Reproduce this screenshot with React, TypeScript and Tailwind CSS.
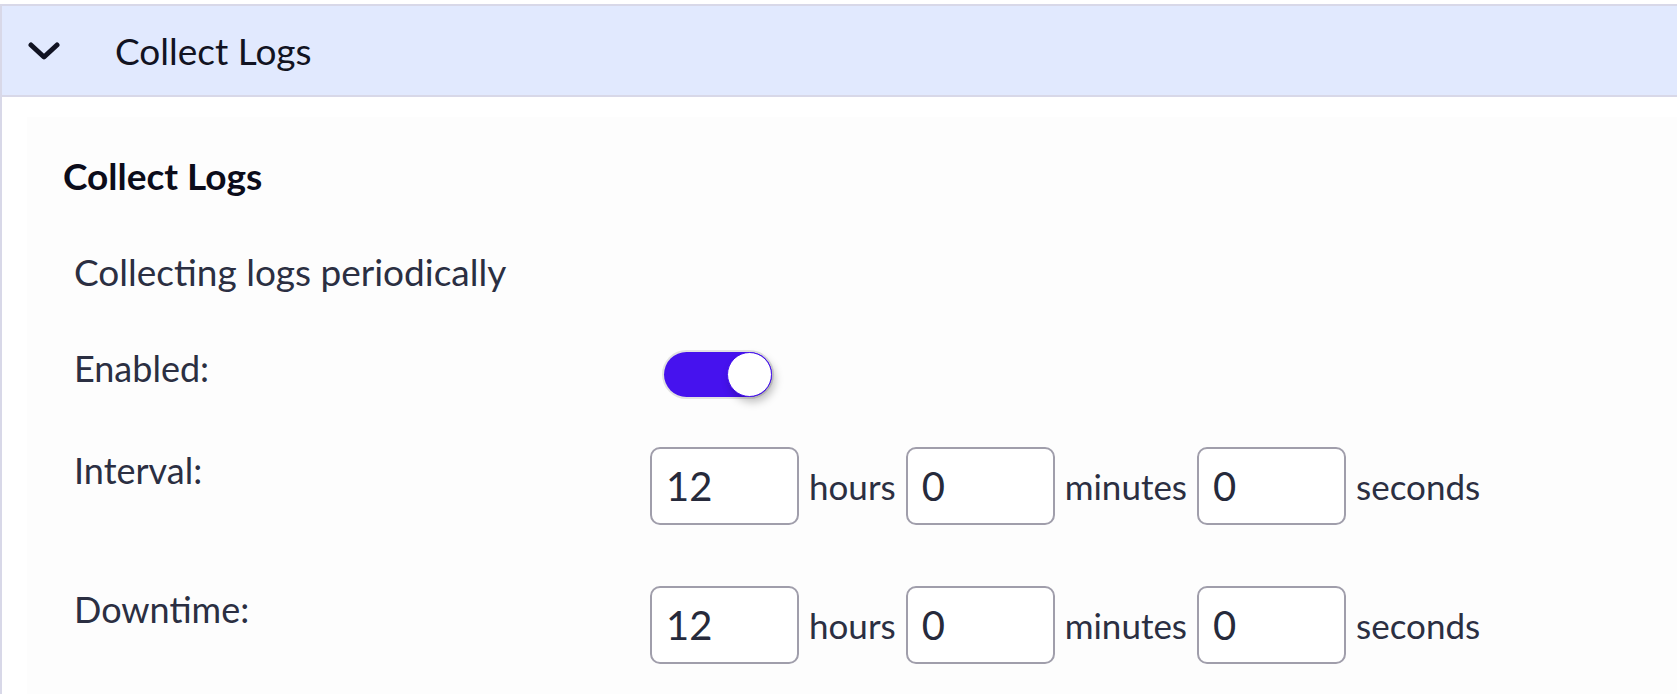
import React from "react";

const font = { fontFamily: "Lato, 'Noto Sans', sans-serif" };

function Chevron() {
  return (
    <svg width="32" height="20" viewBox="0 0 32 20" className="shrink-0">
      <polyline
        points="3,4 16,16 29,4"
        fill="none"
        stroke="#111322"
        strokeWidth="5"
        strokeLinecap="round"
        strokeLinejoin="round"
      />
    </svg>
  );
}

function Toggle() {
  return (
    <div className="relative h-[45px] w-[108px] rounded-full bg-[#4612ee] ring-2 ring-[#e2e2e2]">
      <div className="absolute right-0 top-0 h-[45px] w-[45px] rounded-full border border-[#4612ee] bg-white shadow-[3px_5px_8px_rgba(0,0,0,0.25)]" />
    </div>
  );
}

function TimeInput({ value }: { value: string }) {
  return (
    <div className="flex h-[78px] w-[149px] items-center rounded-[10px] border-2 border-[#a09eab] bg-white px-[14px] text-[40px] text-[#262a3b]">
      {value}
    </div>
  );
}

function TimeRow({ label }: { label: string }) {
  return (
    <div className="flex items-start">
      <div className="w-[576px] pt-[2px] text-[36px] leading-[43px] text-[#2b2f42]">{label}</div>
      <div className="flex items-center text-[35px] text-[#2b2f42]">
        <TimeInput value="12" />
        <span className="px-[10px]">hours</span>
        <TimeInput value="0" />
        <span className="px-[10px]">minutes</span>
        <TimeInput value="0" />
        <span className="px-[10px]">seconds</span>
      </div>
    </div>
  );
}

export default function App() {
  return (
    <div className="min-h-[694px] bg-white pt-[4px]" style={font}>
      <div className="border-l-2 border-[#d8d8e8] min-h-[690px]">
        {/* Accordion header */}
        <div className="flex h-[93px] items-center border-y-2 border-[#d8d8e8] bg-[#e1e9fe] pl-[26px]">
          <Chevron />
          <span className="ml-[55px] text-[37px] text-[#111322]">Collect Logs</span>
        </div>

        {/* Body */}
        <div className="pl-[25px] pt-[20px]">
          <div className="bg-[#fdfdfd] pl-[36px] pt-[37px] pb-[40px] min-h-[580px]">
            <h2 className="text-[37px] leading-[44px] font-bold text-[#0b0c1a]">Collect Logs</h2>
            <div className="ml-[11px] mt-[52px]">
              <p className="text-[37px] leading-[44px] text-[#2b2f42]">Collecting logs periodically</p>

              <div className="mt-[53px] flex items-start">
                <div className="w-[590px] text-[36px] leading-[43px] text-[#2b2f42]">Enabled:</div>
                <div className="pt-[5px]">
                  <Toggle />
                </div>
              </div>

              <div className="mt-[50px]">
                <TimeRow label="Interval:" />
              </div>
              <div className="mt-[61px]">
                <TimeRow label="Downtime:" />
              </div>
            </div>
          </div>
        </div>
      </div>
    </div>
  );
}
